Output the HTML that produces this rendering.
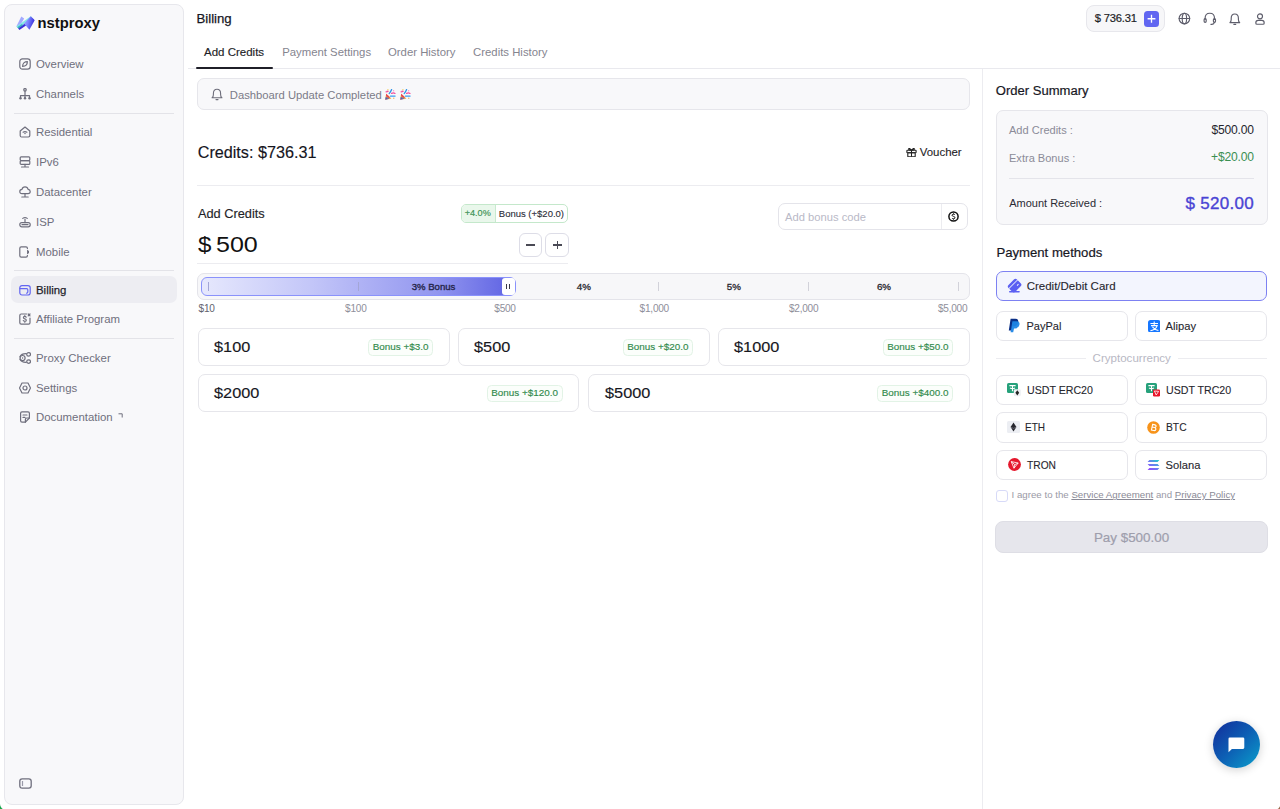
<!DOCTYPE html><html><head><meta charset="utf-8"><style>
*{margin:0;padding:0;box-sizing:border-box}
html,body{width:1280px;height:809px;overflow:hidden;background:#fff}
body{position:relative;font-family:"Liberation Sans",sans-serif}
.t{position:absolute;white-space:pre}
</style></head><body>
<div style="position:absolute;left:4px;top:4px;width:180px;height:801px;background:#f8f8fa;border:1px solid #e7e7ec;border-radius:8px;"></div>
<svg style="position:absolute;left:15.9px;top:16.3px;" width="19" height="15" viewBox="0 0 19 15"><defs><linearGradient id="lg1" x1="0" y1="0" x2="1" y2="0.3"><stop offset="0" stop-color="#aab2ff"/><stop offset="0.45" stop-color="#7d86ff"/><stop offset="1" stop-color="#3a30dc"/></linearGradient></defs>
<path d="M0.3 10.4 L5.3 0.4 L8.2 2.6 L3.6 10.2 Z" fill="#a3aaff"/>
<path d="M0.3 10.4 L14.8 0.2 L16.6 2.2 L2.1 12.3 Z" fill="#86e9e8"/>
<path d="M2.1 12.3 L16.6 2.2 L18.2 4.1 L3.4 14.1 Z" fill="#3d30d8"/>
<path d="M1.2 11.2 L6 8 L7 9.2 L2.4 12.4 Z" fill="#2aa3b8" opacity="0.8"/>
<path d="M8 7.4 L14.8 0.2 L18.7 4.3 L13.4 13.7 Z" fill="url(#lg1)"/></svg>
<div class="t" style="left:37.5px;top:16.27px;font-size:14.8px;line-height:14.8px;color:#111;font-weight:700;letter-spacing:0px;">nstproxy</div>
<div style="position:absolute;left:11px;top:276px;width:166px;height:27px;background:#ededf2;border-radius:7px;"></div>
<div class="t" style="left:36px;top:59.15px;font-size:11.4px;line-height:11.4px;color:#6f6f7d;font-weight:400;">Overview</div>
<div class="t" style="left:36px;top:89.15px;font-size:11.4px;line-height:11.4px;color:#6f6f7d;font-weight:400;">Channels</div>
<div class="t" style="left:36px;top:127.15px;font-size:11.4px;line-height:11.4px;color:#6f6f7d;font-weight:400;">Residential</div>
<div class="t" style="left:36px;top:157.15px;font-size:11.4px;line-height:11.4px;color:#6f6f7d;font-weight:400;">IPv6</div>
<div class="t" style="left:36px;top:187.15px;font-size:11.4px;line-height:11.4px;color:#6f6f7d;font-weight:400;">Datacenter</div>
<div class="t" style="left:36px;top:216.65px;font-size:11.4px;line-height:11.4px;color:#6f6f7d;font-weight:400;">ISP</div>
<div class="t" style="left:36px;top:246.65px;font-size:11.4px;line-height:11.4px;color:#6f6f7d;font-weight:400;">Mobile</div>
<div class="t" style="left:36px;top:284.65px;font-size:11.4px;line-height:11.4px;color:#1f1f2b;font-weight:400;-webkit-text-stroke:0.25px #1f1f2b;">Billing</div>
<div class="t" style="left:36px;top:314.15px;font-size:11.4px;line-height:11.4px;color:#6f6f7d;font-weight:400;">Affiliate Program</div>
<div class="t" style="left:36px;top:352.65px;font-size:11.4px;line-height:11.4px;color:#6f6f7d;font-weight:400;">Proxy Checker</div>
<div class="t" style="left:36px;top:382.65px;font-size:11.4px;line-height:11.4px;color:#6f6f7d;font-weight:400;">Settings</div>
<div class="t" style="left:36px;top:412.15px;font-size:11.4px;line-height:11.4px;color:#6f6f7d;font-weight:400;">Documentation</div>
<div style="position:absolute;left:14px;top:113px;width:160px;height:1px;background:#e3e3e8;"></div>
<div style="position:absolute;left:14px;top:270px;width:160px;height:1px;background:#e3e3e8;"></div>
<div style="position:absolute;left:14px;top:338px;width:160px;height:1px;background:#e3e3e8;"></div>
<svg style="position:absolute;left:19px;top:58px;" width="12" height="12" viewBox="0 0 12 12"><rect x="0.8" y="0.8" width="10.4" height="10.4" rx="2.6" fill="none" stroke="#6f6f7d" stroke-width="1.2" stroke-linecap="round" stroke-linejoin="round"/><path d="M3.6 8.4 C3.6 5.5 5.5 3.6 8.4 3.6 C8.4 6.5 6.5 8.4 3.6 8.4 Z" fill="none" stroke="#6f6f7d" stroke-width="1.2" stroke-linecap="round" stroke-linejoin="round"/></svg>
<svg style="position:absolute;left:19px;top:88px;" width="12" height="12" viewBox="0 0 12 12"><circle cx="6" cy="1.8" r="1.25" fill="none" stroke="#6f6f7d" stroke-width="1.2" stroke-linecap="round" stroke-linejoin="round"/><path d="M6 3.1 V10 M1.5 7.6 H10.5 M1.5 7.6 V10 M10.5 7.6 V10" fill="none" stroke="#6f6f7d" stroke-width="1.2" stroke-linecap="round" stroke-linejoin="round"/><circle cx="1.5" cy="10.3" r="1.2" fill="#6f6f7d"/><circle cx="6" cy="10.3" r="1.2" fill="#6f6f7d"/><circle cx="10.5" cy="10.3" r="1.2" fill="#6f6f7d"/></svg>
<svg style="position:absolute;left:19px;top:126px;" width="12" height="12" viewBox="0 0 12 12"><path d="M1.2 5 L6 1 L10.8 5 V9.6 Q10.8 11 9.4 11 H2.6 Q1.2 11 1.2 9.6 Z" fill="none" stroke="#6f6f7d" stroke-width="1.2" stroke-linecap="round" stroke-linejoin="round"/><path d="M4.1 6.2 Q6 5 7.9 6.2" fill="none" stroke="#6f6f7d" stroke-width="1.2" stroke-linecap="round" stroke-linejoin="round"/><circle cx="6" cy="7.6" r="0.75" fill="#6f6f7d"/></svg>
<svg style="position:absolute;left:19px;top:156px;" width="12" height="12" viewBox="0 0 12 12"><rect x="1.2" y="0.8" width="9.6" height="3.8" rx="1" fill="none" stroke="#6f6f7d" stroke-width="1.2" stroke-linecap="round" stroke-linejoin="round"/><rect x="1.2" y="4.6" width="9.6" height="3.8" rx="1" fill="none" stroke="#6f6f7d" stroke-width="1.2" stroke-linecap="round" stroke-linejoin="round"/><path d="M6 8.4 V11 M2.5 11 H9.5" fill="none" stroke="#6f6f7d" stroke-width="1.2" stroke-linecap="round" stroke-linejoin="round"/></svg>
<svg style="position:absolute;left:19px;top:186px;" width="12" height="12" viewBox="0 0 12 12"><path d="M3 7.6 Q0.8 7.6 0.8 5.4 Q0.8 3.4 3 3.3 Q3.6 0.9 6 0.9 Q8.6 0.9 9.1 3.4 Q11.2 3.6 11.2 5.5 Q11.2 7.6 9 7.6 Z" fill="none" stroke="#6f6f7d" stroke-width="1.2" stroke-linecap="round" stroke-linejoin="round"/><path d="M6 7.6 V10.2 M2.8 11 H9.2" fill="none" stroke="#6f6f7d" stroke-width="1.2" stroke-linecap="round" stroke-linejoin="round"/></svg>
<svg style="position:absolute;left:19px;top:215.5px;" width="12" height="12" viewBox="0 0 12 12"><rect x="0.8" y="6.6" width="10.4" height="4.2" rx="2" fill="none" stroke="#6f6f7d" stroke-width="1.2" stroke-linecap="round" stroke-linejoin="round"/><path d="M6 3.2 V6.6 M3.8 2.4 Q6 0.6 8.2 2.4" fill="none" stroke="#6f6f7d" stroke-width="1.2" stroke-linecap="round" stroke-linejoin="round"/><path d="M3 8.7 H9" fill="none" stroke="#6f6f7d" stroke-width="1.2" stroke-linecap="round" stroke-linejoin="round"/></svg>
<svg style="position:absolute;left:19px;top:245.5px;" width="12" height="12" viewBox="0 0 12 12"><path d="M8.4 2.6 V2.2 Q8.4 0.8 7 0.8 H2.2 Q0.8 0.8 0.8 2.2 V9.8 Q0.8 11.2 2.2 11.2 H7 Q8.4 11.2 8.4 9.8 V9.4" fill="none" stroke="#6f6f7d" stroke-width="1.2" stroke-linecap="round" stroke-linejoin="round"/><path d="M8.6 4.2 Q11 6 8.6 7.8 Z" fill="#6f6f7d" stroke="#6f6f7d" stroke-width="1"/></svg>
<svg style="position:absolute;left:19px;top:283.5px;" width="12" height="12" viewBox="0 0 12 12"><rect x="0.8" y="1.6" width="10.4" height="9.4" rx="2.2" fill="none" stroke="#6366f1" stroke-width="1.2" stroke-linecap="round" stroke-linejoin="round"/><path d="M1 4.6 H7.6 Q8.8 4.6 8.8 5.8 V8 Q8.8 9.2 7.6 9.2" fill="none" stroke="#6366f1" stroke-width="1.2" stroke-linecap="round" stroke-linejoin="round"/></svg>
<svg style="position:absolute;left:19px;top:313px;" width="12" height="12" viewBox="0 0 12 12"><path d="M7.6 1 H2.2 Q0.8 1 0.8 2.4 V9.8 Q0.8 11.2 2.2 11.2 H9.6 Q11 11.2 11 9.8 V5" fill="none" stroke="#6f6f7d" stroke-width="1.2" stroke-linecap="round" stroke-linejoin="round"/><path d="M7.2 4.2 Q6.8 3.4 5.8 3.4 Q4.4 3.4 4.4 4.6 Q4.4 5.6 5.8 5.8 Q7.3 6 7.3 7.2 Q7.3 8.4 5.8 8.4 Q4.7 8.4 4.3 7.6 M5.8 2.6 V3.4 M5.8 8.4 V9.2 M9.2 1 L11 2.8 M11 1 L9.2 2.8" fill="none" stroke="#6f6f7d" stroke-width="1.2" stroke-linecap="round" stroke-linejoin="round"/></svg>
<svg style="position:absolute;left:19px;top:351.5px;" width="12" height="12" viewBox="0 0 12 12"><circle cx="3.6" cy="6" r="2.5" fill="none" stroke="#6f6f7d" stroke-width="1.2" stroke-linecap="round" stroke-linejoin="round"/><circle cx="3.6" cy="6" r="0.7" fill="#6f6f7d"/><path d="M7.2 1.7 Q2.4 1.6 0.9 4.8 M0.9 7.2 Q2.4 10.4 7.2 10.3" fill="none" stroke="#6f6f7d" stroke-width="1.2" stroke-linecap="round" stroke-linejoin="round"/><ellipse cx="9.6" cy="2.4" rx="1.9" ry="1.7" fill="none" stroke="#6f6f7d" stroke-width="1.2" stroke-linecap="round" stroke-linejoin="round"/><ellipse cx="9.6" cy="9.6" rx="1.9" ry="1.7" fill="none" stroke="#6f6f7d" stroke-width="1.2" stroke-linecap="round" stroke-linejoin="round"/></svg>
<svg style="position:absolute;left:19px;top:381.5px;" width="12" height="12" viewBox="0 0 12 12"><path d="M0.5 6 L3 1 H9 L11.5 6 L9 11 H3 Z" fill="none" stroke="#6f6f7d" stroke-width="1.2" stroke-linecap="round" stroke-linejoin="round"/><circle cx="6" cy="6" r="2" fill="none" stroke="#6f6f7d" stroke-width="1.2" stroke-linecap="round" stroke-linejoin="round"/></svg>
<svg style="position:absolute;left:19px;top:411px;" width="12" height="12" viewBox="0 0 12 12"><path d="M10.4 7 V2.2 Q10.4 0.8 9 0.8 H3 Q1.6 0.8 1.6 2.2 V9.8 Q1.6 11.2 3 11.2 H6.4 Z" fill="none" stroke="#6f6f7d" stroke-width="1.2" stroke-linecap="round" stroke-linejoin="round"/><path d="M4 4 H8 M4 6.4 H6" fill="none" stroke="#6f6f7d" stroke-width="1.2" stroke-linecap="round" stroke-linejoin="round"/><path d="M6.4 11.2 V8.4 Q6.4 7 7.8 7 H10.4" fill="none" stroke="#6f6f7d" stroke-width="1.2" stroke-linecap="round" stroke-linejoin="round"/></svg>
<svg style="position:absolute;left:118px;top:413px;" width="5" height="5" viewBox="0 0 5 5"><path d="M0.5 0.8 H4.2 V4.5" fill="none" stroke="#6f6f7d" stroke-width="1"/></svg>
<svg style="position:absolute;left:19px;top:778px;" width="13" height="11" viewBox="0 0 13 11"><rect x="0.8" y="0.8" width="11.4" height="9.4" rx="2.4" fill="none" stroke="#6f6f7d" stroke-width="1.3"/><path d="M3.5 3 V8" stroke="#9a9aa8" stroke-width="1.2"/></svg>
<div class="t" style="left:196.5px;top:12.33px;font-size:13.2px;line-height:13.2px;color:#17171f;font-weight:400;-webkit-text-stroke:0.25px #17171f;">Billing</div>
<div style="position:absolute;left:1086px;top:5px;width:79px;height:27px;background:#f7f7f9;border:1px solid #e7e7ec;border-radius:8px;"></div>
<div class="t" style="left:1094.8px;top:13.42px;font-size:11.2px;line-height:11.2px;color:#1e1e26;font-weight:400;letter-spacing:-0.2px;-webkit-text-stroke:0.2px #1e1e26;">$ 736.31</div>
<div style="position:absolute;left:1144px;top:11px;width:15px;height:15.5px;background:#6166f1;border-radius:3.5px;"></div>
<svg style="position:absolute;left:1144px;top:11px;" width="15" height="15.5" viewBox="0 0 15 15.5"><path d="M7.5 3.8 V11.7 M3.6 7.75 H11.4" stroke="#fff" stroke-width="1.3"/></svg>
<svg style="position:absolute;left:1178px;top:12px;" width="13" height="13" viewBox="0 0 13 13"><circle cx="6.4" cy="6.5" r="5.3" fill="none" stroke="#5d5d6b" stroke-width="1.15" stroke-linecap="round" stroke-linejoin="round"/><ellipse cx="6.4" cy="6.5" rx="2.2" ry="5.3" fill="none" stroke="#5d5d6b" stroke-width="1.15" stroke-linecap="round" stroke-linejoin="round"/><path d="M1.1 6.5 H11.7" fill="none" stroke="#5d5d6b" stroke-width="1.15" stroke-linecap="round" stroke-linejoin="round"/></svg>
<svg style="position:absolute;left:1202.5px;top:12px;" width="14" height="14" viewBox="0 0 14 14"><path d="M2.1 7.4 V6.2 Q2.1 1.2 6.8 1.2 Q11.5 1.2 11.5 6.2 V7.4" fill="none" stroke="#5d5d6b" stroke-width="1.15" stroke-linecap="round" stroke-linejoin="round"/><rect x="1.1" y="6.6" width="2.1" height="3.8" rx="1.05" fill="none" stroke="#5d5d6b" stroke-width="1.15" stroke-linecap="round" stroke-linejoin="round"/><rect x="10.4" y="6.6" width="2.1" height="3.8" rx="1.05" fill="none" stroke="#5d5d6b" stroke-width="1.15" stroke-linecap="round" stroke-linejoin="round"/><path d="M11.3 10.4 Q11.1 12.3 9 12.3 H7.9" fill="none" stroke="#5d5d6b" stroke-width="1.15" stroke-linecap="round" stroke-linejoin="round"/></svg>
<svg style="position:absolute;left:1228.5px;top:12.5px;" width="12" height="13" viewBox="0 0 12 13"><path d="M0.9 9.6 Q2.2 8.6 2.2 6.6 V5.2 Q2.2 1 5.8 1 Q9.4 1 9.4 5.2 V6.6 Q9.4 8.6 10.7 9.6 Z" fill="none" stroke="#5d5d6b" stroke-width="1.15" stroke-linecap="round" stroke-linejoin="round"/><path d="M4.9 11.4 H6.7" fill="none" stroke="#5d5d6b" stroke-width="1.15" stroke-linecap="round" stroke-linejoin="round"/></svg>
<svg style="position:absolute;left:1254.5px;top:12.5px;" width="11" height="12" viewBox="0 0 11 12"><circle cx="5" cy="3.3" r="2.5" fill="none" stroke="#5d5d6b" stroke-width="1.15" stroke-linecap="round" stroke-linejoin="round"/><path d="M0.8 9.9 Q0.8 7.4 3.2 7.4 H6.8 Q9.2 7.4 9.2 9.9 Q9.2 11.2 8 11.2 H2 Q0.8 11.2 0.8 9.9 Z" fill="none" stroke="#5d5d6b" stroke-width="1.15" stroke-linecap="round" stroke-linejoin="round"/></svg>
<div class="t" style="left:204px;top:47.17px;font-size:11.5px;line-height:11.5px;color:#1d1d27;font-weight:400;-webkit-text-stroke:0.15px #1d1d27;">Add Credits</div>
<div class="t" style="left:282.2px;top:47.29px;font-size:11.35px;line-height:11.35px;color:#85858f;font-weight:400;">Payment Settings</div>
<div class="t" style="left:388px;top:47.29px;font-size:11.35px;line-height:11.35px;color:#85858f;font-weight:400;">Order History</div>
<div class="t" style="left:473.1px;top:47.29px;font-size:11.35px;line-height:11.35px;color:#85858f;font-weight:400;">Credits History</div>
<div style="position:absolute;left:188px;top:68px;width:1092px;height:1px;background:#e9e9ee;"></div>
<div style="position:absolute;left:196px;top:67px;width:76.5px;height:2px;background:#1f1f28;border-radius:1px;"></div>
<div style="position:absolute;left:982px;top:69px;width:1px;height:740px;background:#ececf0;"></div>
<div style="position:absolute;left:197px;top:78px;width:773px;height:32px;background:#f8f8fa;border:1px solid #e6e6eb;border-radius:7px;"></div>
<svg style="position:absolute;left:211px;top:88.3px;" width="12" height="12.5" viewBox="0 0 12 12.5"><path d="M1.1 9.8 Q2.4 8.8 2.4 6.6 V5.4 Q2.4 1.3 6 1.3 Q9.6 1.3 9.6 5.4 V6.6 Q9.6 8.8 10.9 9.8 Z" fill="none" stroke="#6d6d7a" stroke-width="1.1" stroke-linejoin="round"/><path d="M5 11.6 H7" stroke="#6d6d7a" stroke-width="1.1" stroke-linecap="round"/></svg>
<div class="t" style="left:229.8px;top:89.78px;font-size:11.25px;line-height:11.25px;color:#7b7b88;font-weight:400;">Dashboard Update Completed</div>
<svg style="position:absolute;left:384.75px;top:89px;" width="11" height="11" viewBox="0 0 11 11"><path d="M0.2 10.8 L1.2 4.8 L6.4 9.6 Z" fill="#f2a12a"/><path d="M0.9 6.6 L1.2 4.8 L4.9 8.2 L3.4 8.9 Z" fill="#e8405a"/><path d="M0.2 10.8 L0.6 8.2 L3.6 10.1 Z" fill="#5a52b8"/><path d="M0.7 8.3 L4.2 9.7" stroke="#3f6fd0" stroke-width="0.7"/>
<circle cx="1.4" cy="2.7" r="0.9" fill="#f06ab0"/><circle cx="2.8" cy="2.3" r="0.9" fill="#f0509a"/><circle cx="2.9" cy="0.8" r="0.7" fill="#f0d36a"/>
<path d="M4.2 4.6 Q5.6 3.2 6.6 0.6" stroke="#2d92e8" stroke-width="1.3" fill="none" stroke-linecap="round"/><path d="M6.6 4.4 Q8.4 3.2 10 4.4" stroke="#f2509e" stroke-width="1.3" fill="none" stroke-linecap="round"/><circle cx="8.6" cy="1.8" r="0.7" fill="#f59ac8"/>
<path d="M5.4 7.1 H10.1" stroke="#3a9cf0" stroke-width="1.2" stroke-linecap="round"/><circle cx="8.8" cy="9.2" r="0.6" fill="#f0a030"/></svg>
<svg style="position:absolute;left:399.75px;top:89px;" width="11" height="11" viewBox="0 0 11 11"><path d="M0.2 10.8 L1.2 4.8 L6.4 9.6 Z" fill="#f2a12a"/><path d="M0.9 6.6 L1.2 4.8 L4.9 8.2 L3.4 8.9 Z" fill="#e8405a"/><path d="M0.2 10.8 L0.6 8.2 L3.6 10.1 Z" fill="#5a52b8"/><path d="M0.7 8.3 L4.2 9.7" stroke="#3f6fd0" stroke-width="0.7"/>
<circle cx="1.4" cy="2.7" r="0.9" fill="#f06ab0"/><circle cx="2.8" cy="2.3" r="0.9" fill="#f0509a"/><circle cx="2.9" cy="0.8" r="0.7" fill="#f0d36a"/>
<path d="M4.2 4.6 Q5.6 3.2 6.6 0.6" stroke="#2d92e8" stroke-width="1.3" fill="none" stroke-linecap="round"/><path d="M6.6 4.4 Q8.4 3.2 10 4.4" stroke="#f2509e" stroke-width="1.3" fill="none" stroke-linecap="round"/><circle cx="8.6" cy="1.8" r="0.7" fill="#f59ac8"/>
<path d="M5.4 7.1 H10.1" stroke="#3a9cf0" stroke-width="1.2" stroke-linecap="round"/><circle cx="8.8" cy="9.2" r="0.6" fill="#f0a030"/></svg>
<div class="t" style="left:197.7px;top:143.89px;font-size:16.2px;line-height:16.2px;color:#15151d;font-weight:400;-webkit-text-stroke:0.15px #15151d;">Credits: $736.31</div>
<svg style="position:absolute;left:906px;top:146.5px;" width="11" height="10.5" viewBox="0 0 11 10.5"><rect x="0.9" y="3.2" width="9.2" height="2.6" rx="0.6" fill="none" stroke="#222" stroke-width="1.1"/><rect x="1.8" y="5.8" width="7.4" height="4" rx="0.6" fill="none" stroke="#222" stroke-width="1.1"/><path d="M5.5 3.2 V9.8 M5.5 3.2 Q3.2 0.4 2.6 2 Q2.4 3 5.5 3.2 Q7.8 0.4 8.4 2 Q8.6 3 5.5 3.2" fill="none" stroke="#222" stroke-width="1.05"/></svg>
<div class="t" style="left:919.7px;top:146.91px;font-size:11.45px;line-height:11.45px;color:#1e1e26;font-weight:400;-webkit-text-stroke:0.1px #1e1e26;">Voucher</div>
<div style="position:absolute;left:197px;top:185px;width:773px;height:1px;background:#ececf0;"></div>
<div class="t" style="left:197.9px;top:208.16px;font-size:12.8px;line-height:12.8px;color:#1f1f28;font-weight:400;-webkit-text-stroke:0.15px #1f1f28;">Add Credits</div>
<div class="t" style="left:197.6px;top:234.50px;font-size:21.5px;line-height:21.5px;color:#111;font-weight:400;transform:scaleX(1.12);transform-origin:0 0;">$</div>
<div class="t" style="left:215.6px;top:234.50px;font-size:21.5px;line-height:21.5px;color:#111;font-weight:400;transform:scaleX(1.165);transform-origin:0 0;">500</div>
<div style="position:absolute;left:461px;top:204px;width:107px;height:19px;background:#fff;border:1px solid #c4e8cb;border-radius:5px;overflow:hidden;"></div>
<div style="position:absolute;left:462px;top:205px;width:32.5px;height:17px;background:#e9f7eb;border-top-left-radius:4px;border-bottom-left-radius:4px;"></div>
<div style="position:absolute;left:494.5px;top:205px;width:1.0px;height:17px;background:#c8eacf;"></div>
<div class="t" style="left:464.7px;top:209.10px;font-size:9.1px;line-height:9.1px;color:#3a9052;font-weight:400;-webkit-text-stroke:0.15px #3a9052;">+4.0%</div>
<div class="t" style="left:498.8px;top:208.76px;font-size:9.5px;line-height:9.5px;color:#2b2b35;font-weight:400;-webkit-text-stroke:0.1px #2b2b35;">Bonus (+$20.0)</div>
<div style="position:absolute;left:518.5px;top:233px;width:23.5px;height:24px;background:#fff;border:1px solid #dddde7;border-radius:6px;"></div>
<div style="position:absolute;left:545px;top:233px;width:24px;height:24px;background:#fff;border:1px solid #dddde7;border-radius:6px;"></div>
<div style="position:absolute;left:526px;top:244.4px;width:8.5px;height:1.1999999999999886px;background:#4a4a55;"></div>
<div style="position:absolute;left:553px;top:244.4px;width:8.5px;height:1.1999999999999886px;background:#4a4a55;"></div>
<div style="position:absolute;left:556.65px;top:240.8px;width:1.2000000000000455px;height:8.399999999999977px;background:#4a4a55;"></div>
<div style="position:absolute;left:197px;top:263px;width:371px;height:1px;background:#ececf0;"></div>
<div style="position:absolute;left:778px;top:203px;width:189.5px;height:27px;background:#fff;border:1px solid #e4e4ea;border-radius:7px;"></div>
<div style="position:absolute;left:941px;top:204px;width:1px;height:25px;background:#ececf0;"></div>
<div class="t" style="left:785.1px;top:212.12px;font-size:11.2px;line-height:11.2px;color:#b9b9c7;font-weight:400;">Add bonus code</div>
<svg style="position:absolute;left:948.2px;top:211px;" width="11" height="11" viewBox="0 0 11 11"><circle cx="5.5" cy="5.5" r="4.6" fill="none" stroke="#111" stroke-width="1.5"/><path d="M7 3.9 Q6.6 3.2 5.5 3.2 Q4.1 3.2 4.1 4.3 Q4.1 5.2 5.5 5.4 Q6.9 5.6 6.9 6.7 Q6.9 7.8 5.5 7.8 Q4.4 7.8 4 7 M5.5 2.4 V3.2 M5.5 7.8 V8.6" fill="none" stroke="#111" stroke-width="1"/></svg>
<div style="position:absolute;left:197px;top:273px;width:773px;height:26.5px;background:#f7f7f9;border:1px solid #e4e4ea;border-radius:7px;"></div>
<div style="position:absolute;left:201.3px;top:277px;width:314.7px;height:19px;background:linear-gradient(90deg,#e6e8fd 0%,#c3c6f8 35%,#b0b3f5 50%,#9296ef 75%,#5d61e3 100%);border:1px solid #8a92fb;border-radius:6px;"></div>
<div style="position:absolute;left:207.7px;top:282px;width:1.0px;height:9px;background:#a3a6d6;"></div>
<div style="position:absolute;left:358.1px;top:282px;width:1.0px;height:9px;background:#a3a6d6;"></div>
<div style="position:absolute;left:658.25px;top:282px;width:1.0px;height:9px;background:#d2d2da;"></div>
<div style="position:absolute;left:807.9px;top:282px;width:1.0px;height:9px;background:#d2d2da;"></div>
<div style="position:absolute;left:958.1px;top:282px;width:1.0px;height:9px;background:#d2d2da;"></div>
<div style="position:absolute;left:502px;top:278px;width:12.799999999999955px;height:17px;background:#fff;border-radius:3px;"></div>
<div style="position:absolute;left:506.4px;top:284.2px;width:1.0px;height:5.0px;background:#3a3a48;"></div>
<div style="position:absolute;left:509.2px;top:284.2px;width:1.0px;height:5.0px;background:#3a3a48;"></div>
<div class="t" style="left:433.5px;transform:translateX(-50%);top:282.17px;font-size:9.6px;line-height:9.6px;color:#25254a;font-weight:400;-webkit-text-stroke:0.35px #25254a;">3% Bonus</div>
<div class="t" style="left:583.8px;transform:translateX(-50%);top:282.00px;font-size:9.8px;line-height:9.8px;color:#26262e;font-weight:400;-webkit-text-stroke:0.3px #26262e;">4%</div>
<div class="t" style="left:733.8px;transform:translateX(-50%);top:282.00px;font-size:9.8px;line-height:9.8px;color:#26262e;font-weight:400;-webkit-text-stroke:0.3px #26262e;">5%</div>
<div class="t" style="left:884px;transform:translateX(-50%);top:282.00px;font-size:9.8px;line-height:9.8px;color:#26262e;font-weight:400;-webkit-text-stroke:0.3px #26262e;">6%</div>
<div class="t" style="left:206.6px;transform:translateX(-50%);top:303.75px;font-size:10.1px;line-height:10.1px;color:#63636e;font-weight:400;letter-spacing:-0.25px;">$10</div>
<div class="t" style="left:355.8px;transform:translateX(-50%);top:303.75px;font-size:10.1px;line-height:10.1px;color:#8f8f9b;font-weight:400;letter-spacing:-0.25px;">$100</div>
<div class="t" style="left:505px;transform:translateX(-50%);top:303.75px;font-size:10.1px;line-height:10.1px;color:#8f8f9b;font-weight:400;letter-spacing:-0.25px;">$500</div>
<div class="t" style="left:654.3px;transform:translateX(-50%);top:303.75px;font-size:10.1px;line-height:10.1px;color:#8f8f9b;font-weight:400;letter-spacing:-0.25px;">$1,000</div>
<div class="t" style="left:803.6px;transform:translateX(-50%);top:303.75px;font-size:10.1px;line-height:10.1px;color:#8f8f9b;font-weight:400;letter-spacing:-0.25px;">$2,000</div>
<div class="t" style="left:952.6px;transform:translateX(-50%);top:303.75px;font-size:10.1px;line-height:10.1px;color:#8f8f9b;font-weight:400;letter-spacing:-0.25px;">$5,000</div>
<div style="position:absolute;left:197.5px;top:328px;width:252.0px;height:38px;background:#fff;border:1px solid #e6e6eb;border-radius:7px;"></div>
<div class="t" style="left:214.1px;top:340.40px;font-size:14.3px;line-height:14.3px;color:#17171f;font-weight:400;-webkit-text-stroke:0.15px #17171f;transform:scaleX(1.14);transform-origin:0 0;">$100</div>
<div class="t" style="right:847.0px;top:339px;height:16.5px;padding:0 3.5px;border:1px solid #e2f3e6;background:#fbfefb;border-radius:4.5px;font-size:9.9px;line-height:13.8px;color:#318a4c;-webkit-text-stroke:0.15px #318a4c;">Bonus +$3.0</div>
<div style="position:absolute;left:457.5px;top:328px;width:252.0px;height:38px;background:#fff;border:1px solid #e6e6eb;border-radius:7px;"></div>
<div class="t" style="left:474.1px;top:340.40px;font-size:14.3px;line-height:14.3px;color:#17171f;font-weight:400;-webkit-text-stroke:0.15px #17171f;transform:scaleX(1.14);transform-origin:0 0;">$500</div>
<div class="t" style="right:587.0px;top:339px;height:16.5px;padding:0 3.5px;border:1px solid #e2f3e6;background:#fbfefb;border-radius:4.5px;font-size:9.9px;line-height:13.8px;color:#318a4c;-webkit-text-stroke:0.15px #318a4c;">Bonus +$20.0</div>
<div style="position:absolute;left:717.5px;top:328px;width:252.0px;height:38px;background:#fff;border:1px solid #e6e6eb;border-radius:7px;"></div>
<div class="t" style="left:734.1px;top:340.40px;font-size:14.3px;line-height:14.3px;color:#17171f;font-weight:400;-webkit-text-stroke:0.15px #17171f;transform:scaleX(1.14);transform-origin:0 0;">$1000</div>
<div class="t" style="right:327.0px;top:339px;height:16.5px;padding:0 3.5px;border:1px solid #e2f3e6;background:#fbfefb;border-radius:4.5px;font-size:9.9px;line-height:13.8px;color:#318a4c;-webkit-text-stroke:0.15px #318a4c;">Bonus +$50.0</div>
<div style="position:absolute;left:197.5px;top:374px;width:381.5px;height:38px;background:#fff;border:1px solid #e6e6eb;border-radius:7px;"></div>
<div class="t" style="left:214.1px;top:386.40px;font-size:14.3px;line-height:14.3px;color:#17171f;font-weight:400;-webkit-text-stroke:0.15px #17171f;transform:scaleX(1.14);transform-origin:0 0;">$2000</div>
<div class="t" style="right:717.5px;top:385px;height:16.5px;padding:0 3.5px;border:1px solid #e2f3e6;background:#fbfefb;border-radius:4.5px;font-size:9.9px;line-height:13.8px;color:#318a4c;-webkit-text-stroke:0.15px #318a4c;">Bonus +$120.0</div>
<div style="position:absolute;left:588px;top:374px;width:381.5px;height:38px;background:#fff;border:1px solid #e6e6eb;border-radius:7px;"></div>
<div class="t" style="left:604.6px;top:386.40px;font-size:14.3px;line-height:14.3px;color:#17171f;font-weight:400;-webkit-text-stroke:0.15px #17171f;transform:scaleX(1.14);transform-origin:0 0;">$5000</div>
<div class="t" style="right:327.0px;top:385px;height:16.5px;padding:0 3.5px;border:1px solid #e2f3e6;background:#fbfefb;border-radius:4.5px;font-size:9.9px;line-height:13.8px;color:#318a4c;-webkit-text-stroke:0.15px #318a4c;">Bonus +$400.0</div>
<div class="t" style="left:995.8px;top:83.50px;font-size:13.05px;line-height:13.05px;color:#17171f;font-weight:400;-webkit-text-stroke:0.2px #17171f;">Order Summary</div>
<div style="position:absolute;left:996px;top:110px;width:271.5px;height:114.5px;background:#f8f8fa;border:1px solid #e6e6eb;border-radius:7px;"></div>
<div class="t" style="left:1009px;top:125.05px;font-size:11.05px;line-height:11.05px;color:#8b8b98;font-weight:400;">Add Credits :</div>
<div class="t" style="right:26.299999999999955px;top:124.26px;font-size:12.1px;line-height:12.1px;color:#26262e;font-weight:400;letter-spacing:-0.2px;">$500.00</div>
<div class="t" style="left:1009px;top:152.55px;font-size:11.05px;line-height:11.05px;color:#8b8b98;font-weight:400;">Extra Bonus :</div>
<div class="t" style="right:26.299999999999955px;top:151.46px;font-size:12.1px;line-height:12.1px;color:#3b8f52;font-weight:400;letter-spacing:-0.2px;">+$20.00</div>
<div style="position:absolute;left:1009px;top:178px;width:244.70000000000005px;height:1px;background:#e4e4ea;"></div>
<div class="t" style="left:1009.2px;top:198.09px;font-size:11.0px;line-height:11.0px;color:#2a2a33;font-weight:400;">Amount Received :</div>
<div class="t" style="right:26.0px;top:194.51px;font-size:17.0px;line-height:17.0px;color:#4a44d4;font-weight:400;-webkit-text-stroke:0.35px #4a44d4;letter-spacing:0.3px;">$ 520.00</div>
<div class="t" style="left:996.4px;top:246.17px;font-size:13.15px;line-height:13.15px;color:#17171f;font-weight:400;-webkit-text-stroke:0.2px #17171f;">Payment methods</div>
<div style="position:absolute;left:996px;top:270.5px;width:271px;height:30.0px;background:#f3f5fe;border:1.3px solid #7d81f2;border-radius:7px;"></div>
<div style="position:absolute;left:996px;top:311px;width:132.29999999999995px;height:30px;background:#fff;border:1px solid #e6e6eb;border-radius:7px;"></div>
<div style="position:absolute;left:1135.4px;top:311px;width:131.89999999999986px;height:30px;background:#fff;border:1px solid #e6e6eb;border-radius:7px;"></div>
<div style="position:absolute;left:996px;top:375px;width:132.29999999999995px;height:29.5px;background:#fff;border:1px solid #e6e6eb;border-radius:7px;"></div>
<div style="position:absolute;left:1135.4px;top:375px;width:131.89999999999986px;height:29.5px;background:#fff;border:1px solid #e6e6eb;border-radius:7px;"></div>
<div style="position:absolute;left:996px;top:411.7px;width:132.29999999999995px;height:31.0px;background:#fff;border:1px solid #e6e6eb;border-radius:7px;"></div>
<div style="position:absolute;left:1135.4px;top:411.7px;width:131.89999999999986px;height:31.0px;background:#fff;border:1px solid #e6e6eb;border-radius:7px;"></div>
<div style="position:absolute;left:996px;top:449.7px;width:132.29999999999995px;height:30.30000000000001px;background:#fff;border:1px solid #e6e6eb;border-radius:7px;"></div>
<div style="position:absolute;left:1135.4px;top:449.7px;width:131.89999999999986px;height:30.30000000000001px;background:#fff;border:1px solid #e6e6eb;border-radius:7px;"></div>
<div class="t" style="left:1026.7px;top:280.87px;font-size:11.5px;line-height:11.5px;color:#26262e;font-weight:400;-webkit-text-stroke:0.1px #26262e;">Credit/Debit Card</div>
<svg style="position:absolute;left:1004px;top:276px;" width="20" height="18" viewBox="0 0 20 18"><g transform="rotate(-45 10.6 9.6)"><rect x="4.6" y="4.8" width="12" height="9.6" rx="2.2" fill="#5b5ff2"/><rect x="4.2" y="7.2" width="12.8" height="0.9" fill="#f3f5fe"/><rect x="12.4" y="10.8" width="2" height="1" fill="#f3f5fe"/></g><rect x="5" y="15" width="10.8" height="1.5" rx="0.7" fill="#5b5ff2"/></svg>
<div class="t" style="left:1026.5px;top:321.19px;font-size:11.0px;line-height:11.0px;color:#26262e;font-weight:400;-webkit-text-stroke:0.1px #26262e;">PayPal</div>
<svg style="position:absolute;left:1008px;top:318px;" width="12" height="15" viewBox="0 0 12 15"><path d="M2.6 0.8 H7.4 Q11 0.8 10.2 4.6 Q9.4 8.2 5.8 8.2 H4.4 L3.6 12.4 H0.8 Z" fill="#0a2f86"/><path d="M4.4 3.2 H8.6 Q12.2 3.2 11.4 7 Q10.6 10.4 7.2 10.4 H6 L5.2 14.2 H2.6 Z" fill="#1f86e6" opacity="0.95"/></svg>
<div class="t" style="left:1165.6px;top:321.42px;font-size:11.2px;line-height:11.2px;color:#26262e;font-weight:400;-webkit-text-stroke:0.1px #26262e;">Alipay</div>
<svg style="position:absolute;left:1147.6px;top:319.7px;" width="12.5" height="12.5" viewBox="0 0 12.5 12.5"><rect x="0" y="0" width="12.5" height="12.5" rx="2.5" fill="#1677ff"/><path d="M2.4 3.4 H10 M6.2 1.6 V5 M3 5.6 H9.2 Q8 9.6 2.4 10.8 M4.4 6.8 Q7 9.8 10.4 10.6" stroke="#fff" stroke-width="1.05" fill="none"/></svg>
<div class="t" style="left:1131.75px;transform:translateX(-50%);top:352.52px;font-size:11.55px;line-height:11.55px;color:#b8b8c4;font-weight:400;">Cryptocurrency</div>
<div style="position:absolute;left:996px;top:357.5px;width:89.5px;height:1.0px;background:#ececf0;"></div>
<div style="position:absolute;left:1177.6px;top:357.5px;width:89.40000000000009px;height:1.0px;background:#ececf0;"></div>
<svg style="position:absolute;left:1007px;top:382.5px;" width="14" height="14" viewBox="0 0 14 14"><rect x="0" y="0" width="11" height="10" rx="1.6" fill="#26a17b"/><path d="M2.4 2.6 H8.6 M5.5 2.6 V8.2 M3 5 Q5.5 6.4 8 5" stroke="#fff" stroke-width="1.1" fill="none"/><rect x="6.8" y="6.2" width="7" height="7" rx="1.4" fill="#eef0f4"/><path d="M10.3 7.2 L12.2 9.8 L10.3 12.4 L8.4 9.8 Z" fill="#222"/></svg>
<div class="t" style="left:1026.6px;top:384.83px;font-size:11.3px;line-height:11.3px;color:#26262e;font-weight:400;-webkit-text-stroke:0.1px #26262e;transform:scaleX(0.94);transform-origin:0 0;">USDT ERC20</div>
<svg style="position:absolute;left:1146.2px;top:382.5px;" width="14" height="14" viewBox="0 0 14 14"><rect x="0" y="0" width="11" height="10" rx="1.6" fill="#26a17b"/><path d="M2.4 2.6 H8.6 M5.5 2.6 V8.2 M3 5 Q5.5 6.4 8 5" stroke="#fff" stroke-width="1.1" fill="none"/><rect x="7" y="6.4" width="7" height="7" rx="1.2" fill="#e8172b"/><path d="M8.4 8 L12.6 8.4 L10.2 12 Z" fill="none" stroke="#fff" stroke-width="0.8"/></svg>
<div class="t" style="left:1165.6px;top:384.83px;font-size:11.3px;line-height:11.3px;color:#26262e;font-weight:400;-webkit-text-stroke:0.1px #26262e;transform:scaleX(0.94);transform-origin:0 0;">USDT TRC20</div>
<svg style="position:absolute;left:1007px;top:421px;" width="13" height="12" viewBox="0 0 13 12"><rect x="0" y="0" width="13" height="12" rx="1.5" fill="#eceef3"/><path d="M6.5 1.6 L9.4 6 L6.5 10.4 L3.6 6 Z" fill="#26262e"/><path d="M3.6 6 L6.5 7.4 L9.4 6" stroke="#8a8a95" stroke-width="0.6" fill="none"/></svg>
<div class="t" style="left:1024.9px;top:422.33px;font-size:11.3px;line-height:11.3px;color:#26262e;font-weight:400;-webkit-text-stroke:0.1px #26262e;transform:scaleX(0.885);transform-origin:0 0;">ETH</div>
<svg style="position:absolute;left:1147px;top:420.5px;" width="13" height="13" viewBox="0 0 13 13"><circle cx="6.5" cy="6.5" r="6.3" fill="#f7931a"/><path d="M5 3.6 H7.4 Q8.8 3.6 8.8 4.9 Q8.8 5.9 7.6 6.3 Q9.2 6.5 9.2 7.8 Q9.2 9.4 7.4 9.4 H5 Z M5 6.3 H7.4" stroke="#fff" stroke-width="1.1" fill="none" transform="rotate(12 6.5 6.5)"/></svg>
<div class="t" style="left:1165.6px;top:422.33px;font-size:11.3px;line-height:11.3px;color:#26262e;font-weight:400;-webkit-text-stroke:0.1px #26262e;transform:scaleX(0.91);transform-origin:0 0;">BTC</div>
<svg style="position:absolute;left:1008px;top:458px;" width="13" height="13" viewBox="0 0 13 13"><circle cx="6.5" cy="6.5" r="6.4" fill="#e5182d"/><path d="M3.2 3.6 L10.2 5 L6 10.2 Z M3.2 3.6 L6.8 6.6 L10.2 5 M6.8 6.6 L6 10.2" stroke="#fff" stroke-width="0.8" fill="none" stroke-linejoin="round"/></svg>
<div class="t" style="left:1026.6px;top:460.03px;font-size:11.3px;line-height:11.3px;color:#26262e;font-weight:400;-webkit-text-stroke:0.1px #26262e;transform:scaleX(0.905);transform-origin:0 0;">TRON</div>
<svg style="position:absolute;left:1147px;top:458.5px;" width="13" height="12" viewBox="0 0 13 12"><defs><linearGradient id="sol" x1="0" y1="1" x2="1" y2="0"><stop offset="0" stop-color="#9945ff"/><stop offset="0.5" stop-color="#6a7ff0"/><stop offset="1" stop-color="#19d3c5"/></linearGradient></defs><path d="M2.4 1 H12.4 L10.6 3 H0.6 Z M0.6 5 H10.6 L12.4 7 H2.4 Z M2.4 9 H12.4 L10.6 11 H0.6 Z" fill="url(#sol)"/></svg>
<div class="t" style="left:1165.6px;top:460.12px;font-size:11.2px;line-height:11.2px;color:#26262e;font-weight:400;-webkit-text-stroke:0.1px #26262e;">Solana</div>
<div style="position:absolute;left:996px;top:490px;width:12px;height:12px;background:#fff;border:1px solid #d7daf8;border-radius:3px;"></div>
<div class="t" style="left:1011.6px;top:490.19px;font-size:9.7px;line-height:9.7px;color:#9a9aa6;">I agree to the <span style="text-decoration:underline;color:#8a8a96">Service Agreement</span> and <span style="text-decoration:underline;color:#8a8a96">Privacy Policy</span></div>
<div style="position:absolute;left:995px;top:520.5px;width:273px;height:32.5px;background:#e6e6ec;border:1px solid #dedee5;border-radius:8px;"></div>
<div class="t" style="left:1131.5px;transform:translateX(-50%);top:530.96px;font-size:13.4px;line-height:13.4px;color:#9e9eac;font-weight:400;-webkit-text-stroke:0.2px #9e9eac;">Pay $500.00</div>
<div style="position:absolute;left:1212.75px;top:721px;width:47px;height:47px;border-radius:50%;background:linear-gradient(135deg,#132b9a 0%,#0d5fb4 50%,#0ba0cc 100%);box-shadow:0 2px 10px rgba(0,0,0,0.18);"></div>
<svg style="position:absolute;left:1227.6px;top:736.6px;" width="17" height="16" viewBox="0 0 17 16"><path d="M1.8 0.5 H15 Q16.3 0.5 16.3 1.8 V10.6 Q16.3 11.9 15 11.9 H3.9 L0.5 15.2 V1.8 Q0.5 0.5 1.8 0.5 Z" fill="#fff"/></svg>
<svg style="position:absolute;left:0px;top:803.5px;" width="5.5" height="5.5" viewBox="0 0 5.5 5.5"><path d="M0 0 A5.5 5.5 0 0 0 5.5 5.5 L0 5.5 Z" fill="#16a34a"/></svg>
<svg style="position:absolute;left:1274.5px;top:803.5px;" width="5.5" height="5.5" viewBox="0 0 5.5 5.5"><path d="M5.5 0 A5.5 5.5 0 0 1 0 5.5 L5.5 5.5 Z" fill="#9a6a4a"/></svg>
</body></html>
